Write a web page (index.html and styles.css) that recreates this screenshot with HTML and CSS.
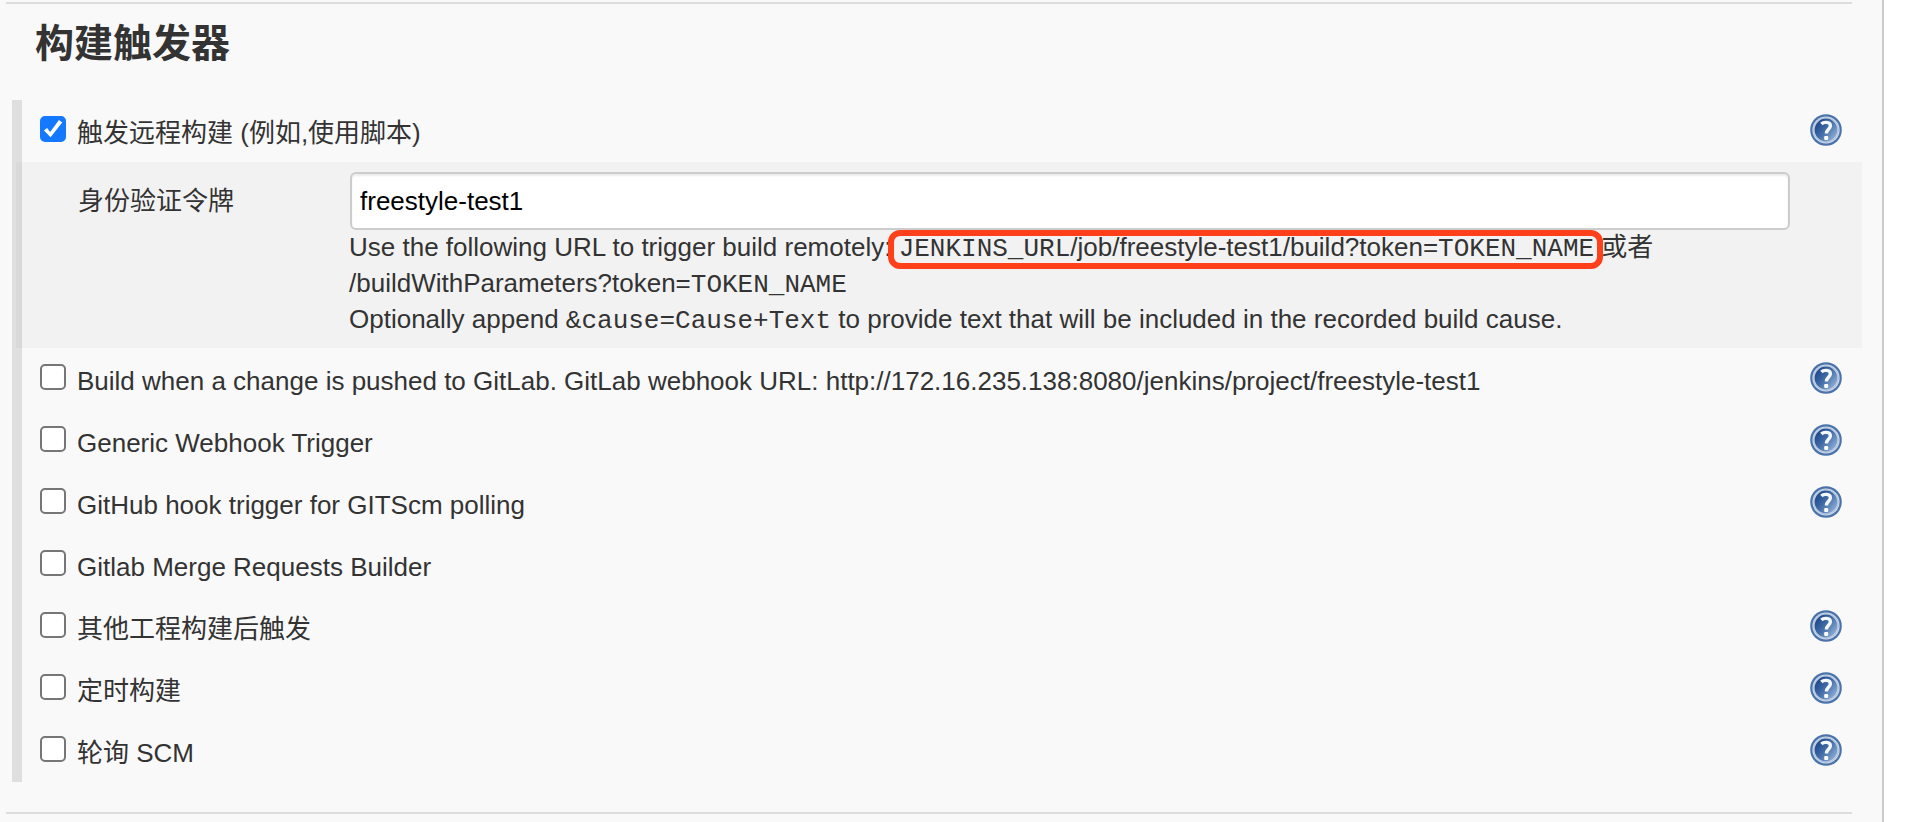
FILE: index.html
```
<!DOCTYPE html>
<html lang="zh-CN">
<head>
<meta charset="utf-8">
<title>构建触发器</title>
<link rel="stylesheet" href="styles.css">
</head>
<body>
<svg class="defs" aria-hidden="true">
  <defs>
    <linearGradient id="disc" x1="0" y1="0.1" x2="1" y2="0.9">
      <stop offset="0.1" stop-color="#1f4788"/>
      <stop offset="0.5" stop-color="#4570aa"/>
      <stop offset="1" stop-color="#9db9dc"/>
    </linearGradient>
    <symbol id="help" viewBox="0 0 32 32">
      <circle cx="16" cy="16" r="15.8" fill="#4a73aa"/>
      <circle cx="16" cy="16" r="13.6" fill="#d3dfee"/>
      <circle cx="16" cy="16" r="12.4" fill="none" stroke="#a9bfdc" stroke-width="1"/>
      <circle cx="16" cy="16" r="11.4" fill="url(#disc)"/>
      <path d="M11.4 10C13.4 7.8 20.4 7.4 20.4 11.8c0 3.4-4 3.6-4 7.6" fill="none" stroke="#f4f7fb" stroke-width="3.4"/>
      <rect x="14.2" y="22" width="4" height="4" rx="1" fill="#fff"/>
    </symbol>
  </defs>
</svg>
<main class="config">
  <section class="section">
    <h1 class="section-title">构建触发器</h1>
    <div class="triggers">
      <div class="row">
        <label class="option"><input class="check" type="checkbox" checked><span>触发远程构建 (例如,使用脚本)</span></label>
        <button class="help" type="button" aria-label="帮助"><svg class="help-icon"><use href="#help"/></svg></button>
      </div>
      <div class="panel">
        <label class="field-label" for="token">身份验证令牌</label>
        <div class="field">
          <input class="text" id="token" type="text" value="freestyle-test1">
          <p class="hint">Use the following URL to trigger build remotely: <span class="marked"><code>JENKINS_URL</code>/job/freestyle-test1/build?token=<code>TOKEN_NAME</code></span> 或者<br>/buildWithParameters?token=<code>TOKEN_NAME</code><br>Optionally append <code>&amp;cause=Cause+Text</code> to provide text that will be included in the recorded build cause.</p>
        </div>
      </div>
      <div class="row">
        <label class="option"><input class="check" type="checkbox"><span>Build when a change is pushed to GitLab. GitLab webhook URL: http://172.16.235.138:8080/jenkins/project/freestyle-test1</span></label>
        <button class="help" type="button" aria-label="帮助"><svg class="help-icon"><use href="#help"/></svg></button>
      </div>
      <div class="row">
        <label class="option"><input class="check" type="checkbox"><span>Generic Webhook Trigger</span></label>
        <button class="help" type="button" aria-label="帮助"><svg class="help-icon"><use href="#help"/></svg></button>
      </div>
      <div class="row">
        <label class="option"><input class="check" type="checkbox"><span>GitHub hook trigger for GITScm polling</span></label>
        <button class="help" type="button" aria-label="帮助"><svg class="help-icon"><use href="#help"/></svg></button>
      </div>
      <div class="row">
        <label class="option"><input class="check" type="checkbox"><span>Gitlab Merge Requests Builder</span></label>
      </div>
      <div class="row">
        <label class="option"><input class="check" type="checkbox"><span>其他工程构建后触发</span></label>
        <button class="help" type="button" aria-label="帮助"><svg class="help-icon"><use href="#help"/></svg></button>
      </div>
      <div class="row">
        <label class="option"><input class="check" type="checkbox"><span>定时构建</span></label>
        <button class="help" type="button" aria-label="帮助"><svg class="help-icon"><use href="#help"/></svg></button>
      </div>
      <div class="row">
        <label class="option"><input class="check" type="checkbox"><span>轮询 SCM</span></label>
        <button class="help" type="button" aria-label="帮助"><svg class="help-icon"><use href="#help"/></svg></button>
      </div>
    </div>
  </section>
</main>
</body>
</html>
```
FILE: styles.css
```
* {
  box-sizing: border-box;
}

body {
  margin: 0;
  background: #fff;
  color: #333;
  font: 26px/36px "Liberation Sans", "Noto Sans CJK SC", sans-serif;
}

.defs {
  position: absolute;
  width: 0;
  height: 0;
}

.config {
  min-height: 100vh;
  margin-right: 26px;
  padding: 2px 30px 0 6px;
  background: #f9f9f9;
  border-right: 2px solid #ccc;
}

.section {
  border-top: 2px solid #ddd;
  border-bottom: 2px solid #ddd;
  padding-bottom: 30px;
}

.section-title {
  margin: 0;
  padding: 16px 29px 32px;
  font-size: 39px;
  line-height: 48px;
}

/* The bar at the left lies over the rows and tints the open panel */
.triggers {
  position: relative;
  margin: 0 -10px 0 6px;
}

.triggers::before {
  content: "";
  position: absolute;
  top: 0;
  bottom: 0;
  left: 0;
  width: 10px;
  background: rgba(0, 0, 0, 0.1);
}

.row {
  display: flex;
  justify-content: space-between;
  align-items: flex-start;
  min-height: 62px;
  padding: 14px 20px 10px 28px;
}

.option {
  display: flex;
  align-items: flex-start;
  gap: 11px;
  padding-top: 1px;
}

.check {
  appearance: none;
  flex: none;
  width: 26px;
  height: 26px;
  margin: 1px 0 0;
  background: #fff;
  border: 2px solid #767676;
  border-radius: 5px;
}

.check:checked {
  background: #1479ff;
  border-color: #1479ff;
}

.check:checked::before {
  content: "";
  display: block;
  height: 100%;
  background: #fff;
  clip-path: polygon(9% 57%, 23% 46%, 37% 64%, 77% 9%, 92% 20%, 39% 88%);
}

.help {
  flex: none;
  padding: 0;
  background: none;
  border: 0;
  cursor: pointer;
}

.help-icon {
  display: block;
  width: 32px;
  height: 32px;
}

.panel {
  display: grid;
  grid-template-columns: 272px 1fr;
  margin-left: 4px;
  padding: 10px 72px 10px 62px;
  background: #f2f2f2;
}

.field-label {
  padding-top: 11px;
}

.text {
  display: block;
  width: 100%;
  height: 58px;
  padding: 0 8px;
  color: #000;
  font: inherit;
  background: #fff;
  border: 2px solid #ccc;
  border-radius: 6px;
  box-shadow: inset 0 2px 2px rgba(0, 0, 0, 0.08);
}

.hint {
  margin: -1px 0 1px -1px;
}

code {
  font: 26px/1 "Liberation Mono", monospace;
}

.marked {
  position: relative;
}

.marked::after {
  content: "";
  position: absolute;
  inset: -2px -9px -7px -11px;
  border: 6px solid #ff401a;
  border-radius: 12px;
}
```
